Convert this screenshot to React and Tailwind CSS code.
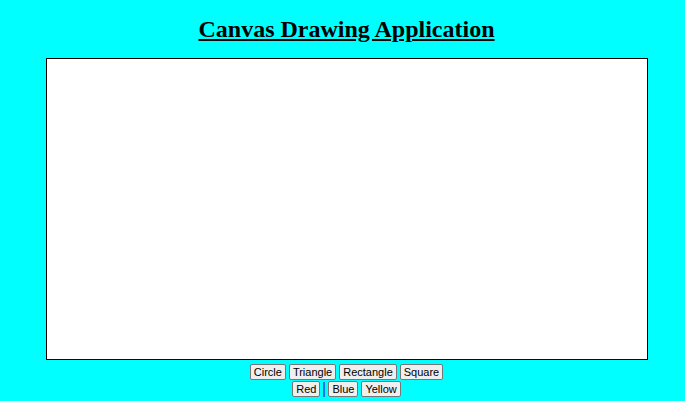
import React from 'react';

const shapes = ['Circle', 'Triangle', 'Rectangle', 'Square'];
const colors = ['Red', 'Blue', 'Yellow'];

const Btn = ({ label }) => (
  <button
    type="button"
    className="h-[16px] px-[3px] border border-[#767676] rounded-[2px] bg-[#efefef] text-[11px] leading-none text-black font-['Liberation_Sans',Arial,sans-serif]"
  >
    {label}
  </button>
);

export default function App() {
  return (
    <div className="min-h-[401px] w-full bg-[#00ffff] pl-[8px] flex flex-col items-center">
      <h1 className="mt-[15px] text-[24px] leading-[28px] font-bold underline font-['Liberation_Serif','Times_New_Roman',serif] text-black">
        Canvas Drawing Application
      </h1>
      <div className="mt-[15px] w-[602px] h-[302px] border border-black bg-white" />
      <div className="mt-[4px] flex gap-[3px]">
        {shapes.map((s) => (
          <Btn key={s} label={s} />
        ))}
      </div>
      <div className="mt-[1px] flex items-center gap-[3px]">
        <Btn label={colors[0]} />
        <span className="w-[2px] h-[15px] bg-[#1a73e8]" />
        <Btn label={colors[1]} />
        <Btn label={colors[2]} />
      </div>
    </div>
  );
}
